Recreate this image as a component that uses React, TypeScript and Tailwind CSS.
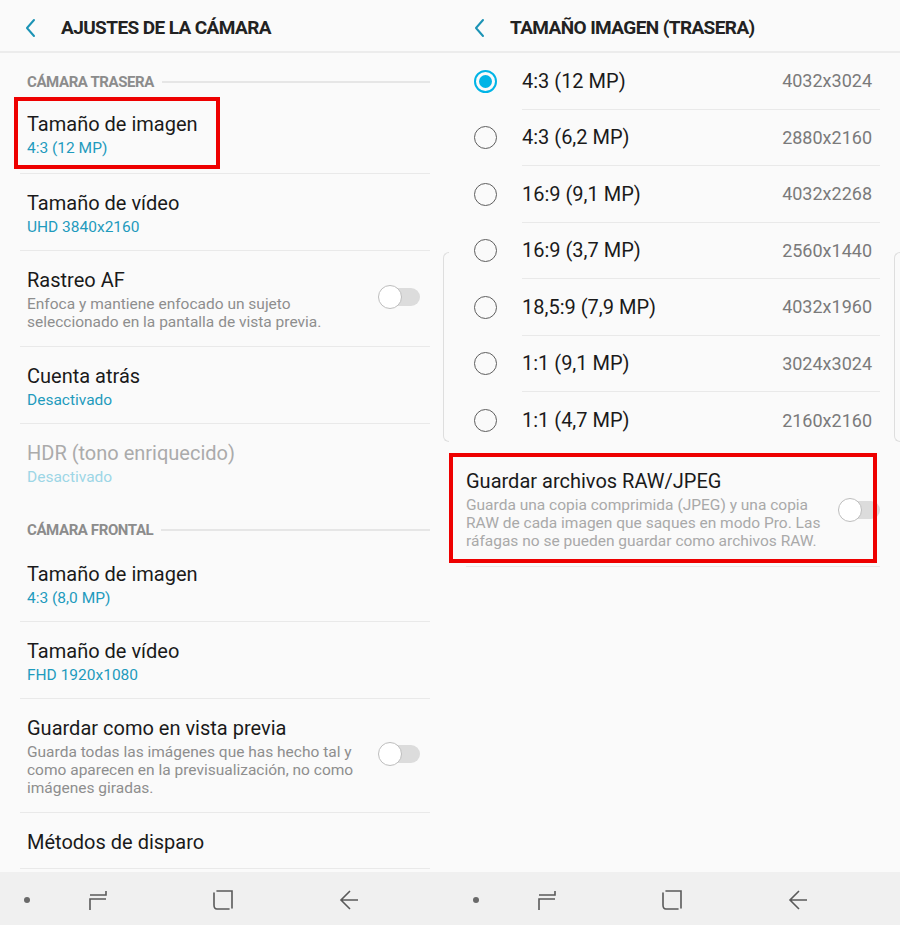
import React from 'react';

const TEAL = 'text-[#1f9bbd]';

const BackChevron: React.FC = () => (
  <svg width="14" height="20" viewBox="0 0 14 20" fill="none">
    <path d="M10 2 L3 10 L10 18" stroke="#1b93b5" strokeWidth="2" strokeLinecap="round" strokeLinejoin="round" />
  </svg>
);

const Header: React.FC<{ title: string }> = ({ title }) => (
  <div className="h-[53px] flex items-center pt-[5px] border-b-2 border-[#ececec] shrink-0">
    <div className="w-[61px] pl-[24px] flex items-center -mt-[1px]">
      <BackChevron />
    </div>
    <h1 className="font-['Roboto',sans-serif] font-bold text-[19px] text-[#222] tracking-[-0.6px]">
      {title}
    </h1>
  </div>
);

const Section: React.FC<{ title: string; h?: string }> = ({ title, h = 'h-[44px]' }) => (
  <div className={`${h} flex items-end pb-[6px] pl-[27px] pr-[19px] gap-[8px]`}>
    <span className="font-['Roboto',sans-serif] font-bold text-[15px] leading-[18px] tracking-[-0.4px] text-[#8c8c8c]">
      {title}
    </span>
    <div className="flex-1 h-[2px] bg-[#e6e6e6] mb-[8px]" />
  </div>
);

const Toggle: React.FC = () => (
  <div className="relative w-[42px] h-[24px] shrink-0">
    <div className="absolute left-[6px] right-0 top-[3px] h-[18px] rounded-full bg-[#dcdcdc]" />
    <div className="absolute left-0 top-0 w-[24px] h-[24px] rounded-full bg-white border-[1.5px] border-[#bdbdbd]" />
  </div>
);

interface RowProps {
  title: string;
  value?: string;
  desc?: string[];
  disabled?: boolean;
  toggle?: boolean;
  noLine?: boolean;
  first?: boolean;
}

const Row: React.FC<RowProps> = ({ title, value, desc, disabled, toggle, noLine, first }) => (
  <div className="pl-[27px] pr-[19px]">
    <div className={`flex items-center ${noLine ? 'border-b border-transparent' : 'border-b border-[#e9e9e9]'} ml-[-7px] pl-[7px]`}>
      <div
        className={`flex-1 ${first ? 'pt-[15px]' : 'pt-[17px]'} ${
          desc ? 'pb-[15px]' : value ? (first ? 'pb-[13px]' : 'pb-[11px]') : 'pb-[14px]'
        }`}
      >
        <div className={`text-[20px] leading-[24px] ${disabled ? 'text-[#ababab]' : 'text-[#1a1a1a]'}`}>{title}</div>
        {value && (
          <div className={`text-[15.5px] leading-[24px] ${disabled ? 'text-[#9dd6e6]' : TEAL}`}>{value}</div>
        )}
        {desc && (
          <div className="mt-[3px] text-[15.5px] leading-[18px] text-[#8e8e8e] whitespace-nowrap">
            {desc.map((d) => (
              <div key={d}>{d}</div>
            ))}
          </div>
        )}
      </div>
      {toggle && (
        <div className="pl-[10px] pr-[10px] -mt-[4px]">
          <Toggle />
        </div>
      )}
    </div>
  </div>
);

const Radio: React.FC<{ on?: boolean }> = ({ on }) =>
  on ? (
    <div className="w-[23px] h-[23px] rounded-full border-2 border-[#00b4e6] flex items-center justify-center">
      <div className="w-[13px] h-[13px] rounded-full bg-[#00b4e6]" />
    </div>
  ) : (
    <div className="w-[23px] h-[23px] rounded-full border-[1.5px] border-[#5e5e5e]" />
  );

const sizes = [
  { label: '4:3 (12 MP)', res: '4032x3024', on: true },
  { label: '4:3 (6,2 MP)', res: '2880x2160' },
  { label: '16:9 (9,1 MP)', res: '4032x2268' },
  { label: '16:9 (3,7 MP)', res: '2560x1440' },
  { label: '18,5:9 (7,9 MP)', res: '4032x1960' },
  { label: '1:1 (9,1 MP)', res: '3024x3024' },
  { label: '1:1 (4,7 MP)', res: '2160x2160' },
];

const NavBar: React.FC = () => (
  <div className="h-[53px] bg-[#f0f0f0] flex items-center shrink-0 relative">
    <svg width="449" height="53" viewBox="0 0 449 53" fill="none" stroke="#5a5a5a" strokeWidth="1.6">
      <circle cx="27" cy="28" r="3" fill="#6a6a6a" stroke="none" />
      <path d="M106 19 V23 H90" />
      <path d="M90 38 V27 H106" />
      <path d="M217 19 H232 V36 M214 21 V33 C214 35.5 215 37 217 37 H229" strokeLinecap="round" />
      <path d="M350 19 L341 28 L350 37 M341 28 H358" />
    </svg>
  </div>
);

const EdgeHandle: React.FC = () => (
  <div className="absolute right-0 top-[252px] w-[6px] h-[190px] rounded-l-[6px] border-l border-t border-b border-[#dedede]" />
);

const LeftPanel: React.FC = () => (
  <div className="w-[449px] h-[925px] bg-[#fafafa] flex flex-col relative overflow-hidden">
    <Header title="AJUSTES DE LA CÁMARA" />
    <div className="flex-1 overflow-hidden">
      <Section title="CÁMARA TRASERA" />
      <Row title="Tamaño de imagen" value="4:3 (12 MP)" first />
      <Row title="Tamaño de vídeo" value="UHD 3840x2160" />
      <Row
        title="Rastreo AF"
        desc={['Enfoca y mantiene enfocado un sujeto', 'seleccionado en la pantalla de vista previa.']}
        toggle
      />
      <Row title="Cuenta atrás" value="Desactivado" />
      <Row title="HDR (tono enriquecido)" value="Desactivado" disabled noLine />
      <Section title="CÁMARA FRONTAL" />
      <Row title="Tamaño de imagen" value="4:3 (8,0 MP)" />
      <Row title="Tamaño de vídeo" value="FHD 1920x1080" />
      <Row
        title="Guardar como en vista previa"
        desc={[
          'Guarda todas las imágenes que has hecho tal y',
          'como aparecen en la previsualización, no como',
          'imágenes giradas.',
        ]}
        toggle
      />
      <Row title="Métodos de disparo" />
    </div>
    <NavBar />
    <EdgeHandle />
    <div className="absolute left-[14px] top-[97px] w-[206px] h-[72px] border-4 border-[#ee0000]" />
  </div>
);

const RightPanel: React.FC = () => (
  <div className="w-[451px] h-[925px] bg-[#fafafa] flex flex-col relative overflow-hidden">
    <Header title="TAMAÑO IMAGEN (TRASERA)" />
    <div className="flex-1 overflow-hidden">
      {sizes.map((s, i) => (
        <div key={s.label} className="h-[56.5px] flex items-stretch">
          <div className="w-[73px] flex items-center pl-[25px]">
            <Radio on={s.on} />
          </div>
          <div
            className={`flex-1 mr-[20px] flex items-center justify-between pr-[8px] ${
              i < sizes.length - 1 ? 'border-b border-[#e9e9e9]' : ''
            }`}
          >
            <span className="text-[20px] text-[#1a1a1a]">{s.label}</span>
            <span className="text-[18px] text-[#7a7a7a]">{s.res}</span>
          </div>
        </div>
      ))}
      <div className="mt-[3px] pl-[17px] pr-[20px]">
        <div className="flex items-center border-b border-[#e9e9e9]">
          <div className="flex-1 pt-[17px] pb-[16px]">
            <div className="text-[20px] leading-[24px] text-[#1a1a1a]">Guardar archivos RAW/JPEG</div>
            <div className="mt-[3px] text-[15.5px] leading-[18px] text-[#a9a9a9] whitespace-nowrap">
              <div>Guarda una copia comprimida (JPEG) y una copia</div>
              <div>RAW de cada imagen que saques en modo Pro. Las</div>
              <div>ráfagas no se pueden guardar como archivos RAW.</div>
            </div>
          </div>
          <div className="pl-[8px] mt-[2px]">
            <Toggle />
          </div>
        </div>
      </div>
    </div>
    <NavBar />
    <EdgeHandle />
    <div className="absolute left-0 top-[453px] w-[428px] h-[110px] border-4 border-[#ee0000]" />
  </div>
);

export default function App() {
  return (
    <div className="w-[900px] h-[925px] flex font-['Roboto',sans-serif] overflow-hidden">
      <LeftPanel />
      <RightPanel />
    </div>
  );
}
